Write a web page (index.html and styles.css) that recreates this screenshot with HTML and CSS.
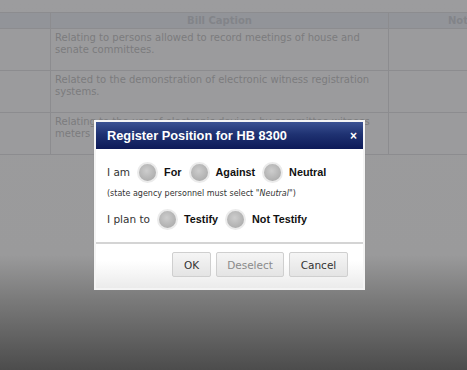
FILE: index.html
```html
<!DOCTYPE html>
<html>
<head>
<meta charset="utf-8">
<link rel="stylesheet" href="styles.css">
</head>
<body>
<div class="page">
  <table class="bills">
    <thead>
      <tr><th class="c1"></th><th class="c2">Bill Caption</th><th class="c3">Notes</th></tr>
    </thead>
    <tbody>
      <tr><td></td><td>Relating to persons allowed to record meetings of house and senate committees.</td><td></td></tr>
      <tr><td></td><td>Related to the demonstration of electronic witness registration systems.</td><td></td></tr>
      <tr><td></td><td>Relating to the use of electronic devices by committee witness<br>meters</td><td></td></tr>
    </tbody>
  </table>
</div>
<div class="modal">
  <div class="titlebar">
    <span class="title">Register Position for HB 8300</span>
    <span class="close">×</span>
  </div>
  <div class="body">
    <div class="row">
      <span class="lbl">I am</span>
      <span class="radio"></span><span class="opt">For</span>
      <span class="radio"></span><span class="opt">Against</span>
      <span class="radio"></span><span class="opt">Neutral</span>
    </div>
    <div class="note">(state agency personnel must select "<i>Neutral</i>")</div>
    <div class="row">
      <span class="lbl">I plan to</span>
      <span class="radio"></span><span class="opt">Testify</span>
      <span class="radio"></span><span class="opt">Not Testify</span>
    </div>
  </div>
  <div class="footer">
    <button class="btn ok">OK</button>
    <button class="btn dis">Deselect</button>
    <button class="btn cancel">Cancel</button>
  </div>
</div>
</body>
</html>
```
FILE: styles.css
```css
html, body {
  margin: 0;
  padding: 0;
  height: 370px;
  overflow: hidden;
}
body {
  background: linear-gradient(to bottom, #9c9c9e 0px, #9a9a9b 255px, #7a7a7a 300px, #4c4c4c 370px);
  font-family: "DejaVu Sans", Verdana, sans-serif;
}
.page {
  padding-top: 12px;
}
.bills {
  border-collapse: collapse;
  table-layout: fixed;
  width: 520px;
  font-size: 10px;
  color: #7b7b7e;
}
.bills th, .bills td {
  border: 1px solid #8c8c8f;
  padding: 0;
}
.bills th {
  height: 15px;
  background: #929499;
  color: #828489;
  font-weight: bold;
  font-size: 10px;
  text-align: center;
}
.bills th.c1 { width: 50px; border-left: none; }
.bills th.c2 { width: 337px; }
.bills th.c3 { width: 131px; text-align: left; padding-left: 59px; }
.bills td {
  height: 42px;
  vertical-align: top;
  background: #9b9b9d;
  line-height: 12px;
  padding: 3px 3px 0 4px;
  box-sizing: border-box;
}
.bills td:first-child { border-left: none; }

.modal {
  position: absolute;
  left: 94px;
  top: 120px;
  width: 267px;
  border: 2px solid #f4f4f4;
  background: #ffffff;
  box-shadow: 0 0 1px #888;
  font-family: "Liberation Sans", Arial, sans-serif;
}
.titlebar {
  height: 27px;
  background: linear-gradient(to bottom, #3b5293 0%, #1f3272 45%, #0d1a58 100%);
  display: flex;
  align-items: center;
  justify-content: space-between;
  padding: 0 6px 0 11px;
  color: #fff;
}
.title {
  font-weight: bold;
  font-size: 12.8px;
}
.close {
  font-weight: bold;
  font-size: 12px;
}
.body {
  padding: 12px 0 12px 11px;
  border-bottom: 2px solid #d4d4d4;
}
.row {
  display: flex;
  align-items: center;
  height: 22px;
}
.lbl {
  color: #333;
  margin-right: 7px;
  font-family: "DejaVu Sans", Verdana, sans-serif;
  font-size: 10.5px;
}
.radio {
  width: 17px;
  height: 17px;
  border-radius: 50%;
  border: 2px solid #ebebeb;
  background: radial-gradient(circle at 45% 40%, #cdcdcd 0%, #b6b6b6 55%, #a4a4a4 100%);
  margin-right: 6px;
  flex: none;
}
.opt {
  font-weight: bold;
  font-size: 10.8px;
  color: #111;
  margin-right: 7px;
}
.note {
  font-size: 8px;
  line-height: 10px;
  color: #333;
  margin: 6px 0 9px 0;
  font-family: "DejaVu Sans", Verdana, sans-serif;
}
.footer {
  display: flex;
  justify-content: flex-end;
  gap: 5px;
  padding: 8px 15px 11px 0;
  background: linear-gradient(to bottom, #ffffff 0%, #ffffff 38%, #ebebeb 100%);
}
.btn {
  height: 25px;
  padding: 0;
  border: 1px solid #cfcfcf;
  border-radius: 2px;
  background: linear-gradient(to bottom, #f5f5f5, #e4e4e4);
  font-family: "DejaVu Sans", Verdana, sans-serif;
  font-size: 10.5px;
  color: #333;
}
.btn.ok { width: 39px; }
.btn.dis { width: 68px; color: #8a8a8a; }
.btn.cancel { width: 59px; }
```
